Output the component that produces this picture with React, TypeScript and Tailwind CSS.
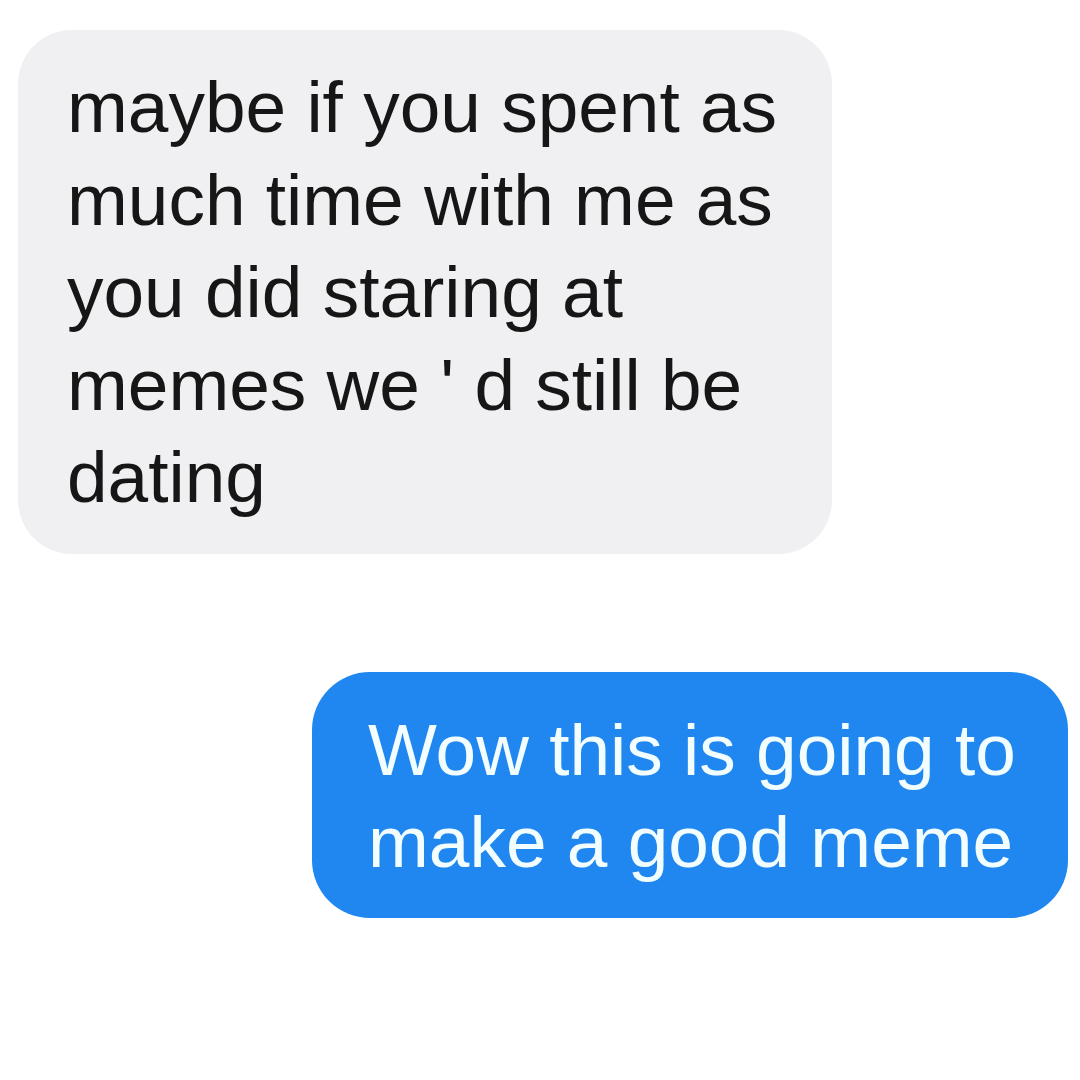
import React from "react";

export default function App() {
  const font = { fontFamily: '"Liberation Sans", Arial, sans-serif' };
  return (
    <div
      className="w-[1080px] h-[1080px] bg-white flex flex-col overflow-hidden"
      style={font}
    >
      <div className="ml-[18px] mt-[30px] w-[814px] rounded-[54px] bg-[#f0eff1] pl-[49px] pr-[16px] pt-[31px] pb-[30px] text-[73px] leading-[92.5px] text-[#161616]">
        <div>maybe if you spent as</div>
        <div>much time with me as</div>
        <div>you did staring at</div>
        <div>memes we &#39; d still be</div>
        <div>dating</div>
      </div>
      <div className="ml-[312px] mt-[118px] w-[756px] rounded-[58px] bg-[#1f87ef] pl-[56px] pr-[12px] pt-[32px] pb-[29px] text-[73px] leading-[92.5px] text-[#f2fdff]">
        <div>Wow this is going to</div>
        <div>make a good meme</div>
      </div>
    </div>
  );
}
